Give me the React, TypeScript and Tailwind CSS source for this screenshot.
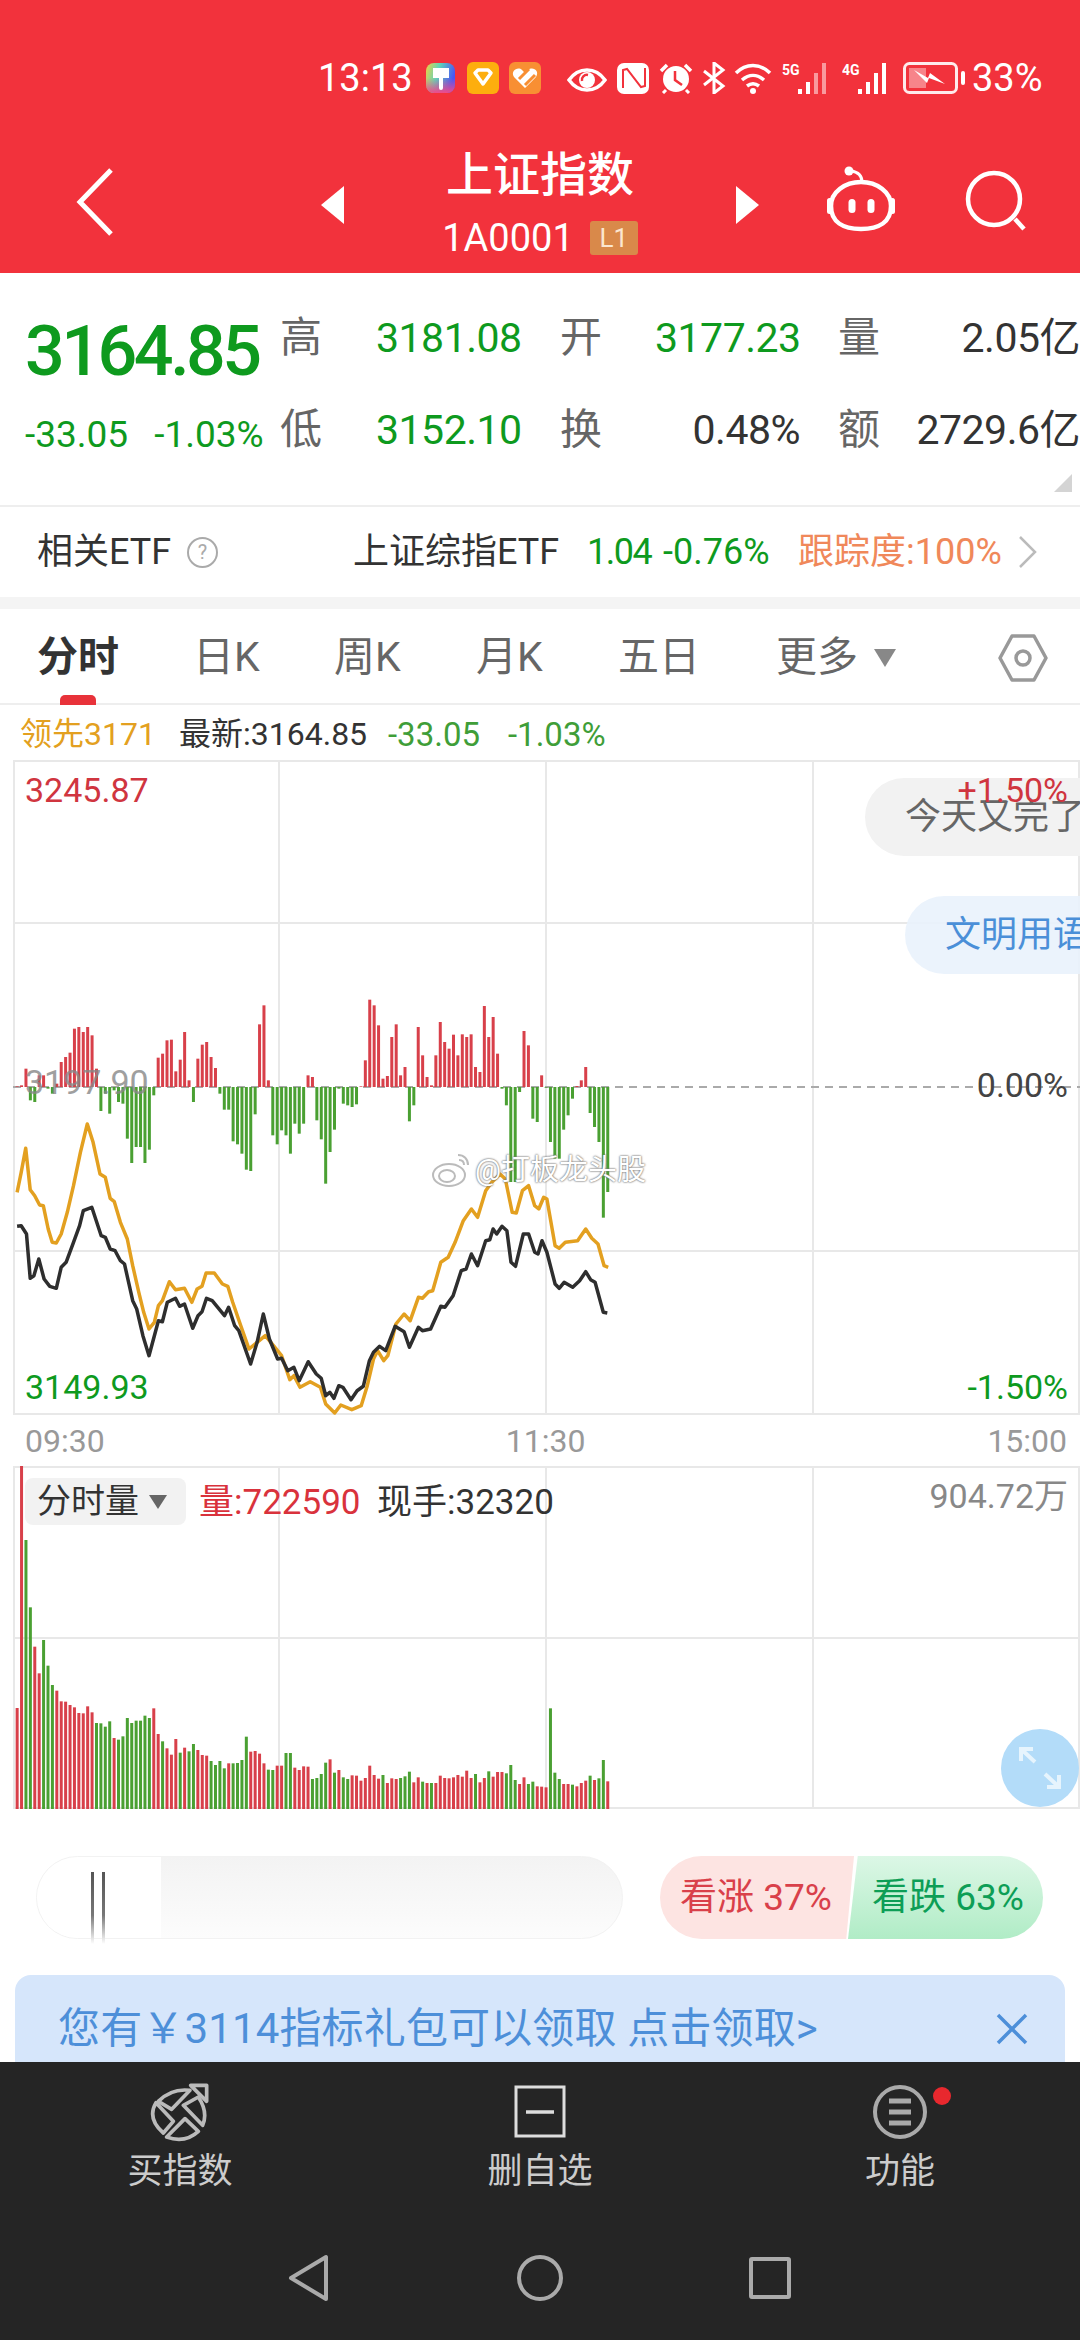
import React from "react";

// bar data is read off the reference at 2.45x horizontal, 3x vertical
const diffBars = [2,5,55,-40,-45,35,35,-5,-20,10,75,90,103,175,180,165,180,155,55,-72,-20,-80,-10,-45,-50,-155,-228,-180,-180,-228,-188,-25,88,100,140,142,47,82,165,20,-45,85,127,135,90,57,-20,-68,-68,-163,-172,-200,-248,-252,-82,188,245,20,-145,-172,-130,-145,-200,-110,-140,-110,35,30,-100,-157,-290,-195,-128,-5,-50,-55,-60,-52,2,80,262,245,185,25,33,150,188,35,60,-103,-55,180,95,30,5,95,195,135,115,157,95,158,150,158,60,45,243,150,210,100,-5,-55,-285,-285,-15,168,125,-95,-105,35,-2,-165,-215,-215,-128,-85,-35,3,20,60,-78,-120,-165,-392,-315];

const volBars: [number, "r" | "g"][] = [[802,"r"],[76,"r"],[298,"g"],[500,"g"],[618,"r"],[698,"r"],[598,"g"],[675,"g"],[733,"g"],[750,"r"],[782,"r"],[783,"r"],[793,"r"],[800,"r"],[817,"r"],[818,"r"],[797,"r"],[815,"r"],[847,"g"],[848,"g"],[858,"g"],[842,"g"],[892,"r"],[897,"g"],[887,"g"],[832,"g"],[847,"g"],[840,"g"],[840,"g"],[825,"g"],[832,"g"],[803,"r"],[880,"r"],[902,"g"],[923,"r"],[942,"r"],[895,"r"],[936,"g"],[921,"r"],[932,"g"],[910,"g"],[928,"r"],[943,"r"],[945,"r"],[961,"g"],[973,"g"],[961,"g"],[983,"g"],[968,"r"],[968,"g"],[967,"g"],[958,"g"],[888,"g"],[933,"r"],[931,"r"],[939,"r"],[968,"r"],[987,"g"],[988,"g"],[975,"r"],[975,"r"],[937,"g"],[937,"g"],[981,"r"],[988,"r"],[977,"r"],[978,"r"],[1015,"g"],[1012,"g"],[1000,"g"],[966,"g"],[956,"r"],[996,"g"],[988,"r"],[1010,"g"],[1015,"g"],[1004,"r"],[1005,"r"],[1020,"r"],[1012,"r"],[975,"r"],[1003,"r"],[1014,"r"],[1003,"g"],[1027,"r"],[1013,"r"],[1015,"r"],[1012,"g"],[1007,"g"],[993,"g"],[1025,"r"],[1010,"r"],[1023,"g"],[1027,"r"],[1027,"g"],[1027,"r"],[1005,"r"],[1012,"r"],[1013,"r"],[1010,"r"],[1003,"r"],[1008,"r"],[990,"r"],[1012,"r"],[1000,"g"],[1025,"r"],[1012,"r"],[992,"g"],[1008,"r"],[994,"r"],[994,"r"],[998,"g"],[973,"g"],[1018,"g"],[1030,"r"],[1010,"r"],[1030,"g"],[1023,"g"],[1037,"r"],[1038,"r"],[1040,"r"],[803,"g"],[996,"g"],[1015,"g"],[1030,"r"],[1030,"r"],[1032,"g"],[1037,"r"],[1027,"r"],[1020,"r"],[1005,"g"],[1018,"r"],[1013,"g"],[958,"g"],[1022,"r"]];

const yellowLine = [42,700,52,640,63,568,74,692,85,710,97,738,106,740,118,810,128,850,138,852,150,825,165,760,180,680,197,580,214,495,228,550,245,645,258,655,270,718,280,728,295,790,312,840,325,920,340,1000,352,1060,365,1110,378,1090,388,1040,398,1025,415,968,430,992,452,988,470,1030,483,990,495,982,505,942,525,942,545,975,558,982,570,1030,590,1100,610,1170,630,1150,650,1130,670,1160,690,1190,710,1262,720,1250,735,1285,760,1268,785,1285,798,1335,820,1362,835,1338,862,1352,885,1340,900,1280,915,1200,925,1175,940,1205,950,1190,970,1095,990,1065,1005,1085,1025,1015,1035,1018,1050,998,1060,995,1080,910,1098,895,1115,850,1135,785,1155,750,1170,775,1190,695,1205,670,1225,645,1238,660,1255,760,1265,762,1280,695,1295,680,1310,740,1320,750,1332,715,1340,720,1360,860,1370,868,1385,850,1415,845,1435,810,1450,838,1465,855,1480,920,1490,925];

const blackLine = [42,802,52,800,65,825,74,958,83,950,95,900,108,960,122,982,138,988,150,925,162,910,180,850,195,800,204,755,225,745,248,830,258,835,270,870,282,875,295,905,305,915,325,1025,335,1050,350,1130,365,1190,388,1085,398,1088,410,1030,430,1018,440,1042,452,1035,472,1108,485,1070,495,1058,506,1018,520,1025,550,1070,560,1045,575,1100,585,1115,614,1215,630,1150,645,1065,660,1140,680,1200,690,1198,705,1235,720,1225,733,1265,755,1208,775,1245,787,1258,798,1310,808,1300,818,1318,830,1280,840,1285,860,1322,875,1295,890,1282,905,1205,915,1180,930,1162,945,1175,968,1102,990,1118,1003,1165,1025,1105,1035,1115,1055,1110,1080,1042,1090,1045,1110,1010,1130,935,1142,930,1155,885,1170,920,1190,845,1200,842,1208,810,1217,825,1230,802,1242,815,1252,910,1263,922,1282,825,1295,825,1310,880,1318,885,1328,845,1340,880,1360,975,1370,988,1382,970,1403,985,1420,965,1435,938,1447,962,1458,970,1478,1060,1488,1062];

const toPoints = (arr: number[]) => {
  const out: string[] = [];
  for (let i = 0; i < arr.length; i += 2) {
    out.push(`${(arr[i] / 2.45).toFixed(1)},${(arr[i + 1] / 3 + 960 - 761).toFixed(1)}`);
  }
  return out.join(" ");
};

// spread n bars evenly between the first and last bar of the reference
const barX = (i: number, n: number) => (42 + (i * (1489 - 42)) / (n - 1)) / 2.45 - 1.5;

const StatusBar = () => (
  <div className="flex items-center h-[32px] mt-[62px] pl-[318px] text-white">
    <span className="text-[38px] leading-none w-[98px]">13:13</span>
    <svg width="224" height="32" viewBox="0 0 224 32" className="ml-[10px]">
      <defs>
        <linearGradient id="paintA" x1="0" y1="0" x2="1" y2="0.3">
          <stop offset="0" stopColor="#f5d040" />
          <stop offset="0.45" stopColor="#5fd6b8" />
          <stop offset="1" stopColor="#4a55f5" />
        </linearGradient>
        <linearGradient id="paintB" x1="0" y1="0" x2="0" y2="1">
          <stop offset="0.5" stopColor="#f04a8a" stopOpacity="0" />
          <stop offset="1" stopColor="#f04a8a" />
        </linearGradient>
      </defs>
      <rect x="0" y="1" width="29" height="30" rx="8" fill="url(#paintA)" />
      <rect x="0" y="1" width="29" height="30" rx="8" fill="url(#paintB)" />
      <path d="M7 6h16v10h-6v10a2 2 0 0 1-4 0V16H7z" fill="#fff" />
      <rect x="41" y="0" width="32" height="32" rx="6" fill="#fdae0e" />
      <path d="M49 11l3-3h10l3 3-8 11z" fill="none" stroke="#fff" strokeWidth="3.500" strokeLinejoin="round" />
      <rect x="83" y="0" width="32" height="32" rx="6" fill="#f88f33" />
      <path d="M99 26L88 15c-4-6 4-11 8-7l3 3 3-3c5-4 12 1 8 7z" fill="#fff" />
      <path d="M93 17l10-10M99 23l10-10" stroke="#f88f33" strokeWidth="3" />
      <path d="M143 18c5-7 11-10 18-10s13 3 18 10c-5 7-11 10-18 10s-13-3-18-10z" fill="none" stroke="#fff" strokeWidth="3.500" />
      <circle cx="161" cy="18" r="8" fill="#fff" />
      <path d="M156 19a5 5 0 0 1 6-6" fill="none" stroke="#f2323c" strokeWidth="2.500" />
      <rect x="191" y="1" width="32" height="31" rx="7" fill="#fff" />
      <path d="M198 26V8l4-1 14 18 4-1V6" fill="none" stroke="#f2323c" strokeWidth="2" transform="translate(-1 0)" />
    </svg>
    <svg width="36" height="32" viewBox="0 0 36 32" className="ml-[8px]">
      <circle cx="18" cy="17" r="13" fill="#fff" />
      <path d="M17 9v9l7 5" fill="none" stroke="#f2323c" strokeWidth="2.500" />
      <path d="M3 9l6-6M33 9l-6-6" stroke="#fff" strokeWidth="3.500" />
      <path d="M8 28l-3 3M28 28l3 3" stroke="#fff" strokeWidth="3" />
    </svg>
    <svg width="24" height="32" viewBox="0 0 24 32" className="ml-[8px]">
      <path d="M2 9l19 15-9 7V1l9 7L2 23" fill="none" stroke="#fff" strokeWidth="3" />
    </svg>
    <svg width="38" height="32" viewBox="0 0 38 32" className="ml-[8px]">
      <path d="M2 11c10-10 24-10 34 0M8 18c7-6 15-6 22 0M13 24c4-3 8-3 12 0" fill="none" stroke="#fff" strokeWidth="3.500" />
      <circle cx="19" cy="29" r="3" fill="#fff" />
    </svg>
    <svg width="50" height="32" viewBox="0 0 50 32" className="ml-[10px]">
      <text x="0" y="13" fill="#fff" fontSize="14" fontWeight="700">5G</text>
      <rect x="16" y="27" width="4" height="5" fill="#fff" />
      <rect x="24" y="20" width="4" height="12" fill="#fff" />
      <rect x="32" y="11" width="4" height="21" fill="#fff" opacity="0.5" />
      <rect x="40" y="1" width="4" height="31" fill="#fff" opacity="0.5" />
    </svg>
    <svg width="50" height="32" viewBox="0 0 50 32" className="ml-[10px]">
      <text x="0" y="13" fill="#fff" fontSize="14" fontWeight="700">4G</text>
      <rect x="16" y="27" width="4" height="5" fill="#fff" />
      <rect x="24" y="20" width="4" height="12" fill="#fff" />
      <rect x="32" y="11" width="4" height="21" fill="#fff" />
      <rect x="40" y="1" width="4" height="31" fill="#fff" />
    </svg>
    <svg width="62" height="32" viewBox="0 0 62 32" className="ml-[11px]">
      <rect x="1.500" y="1.500" width="52" height="29" rx="5" fill="none" stroke="#fff" strokeOpacity="0.9" strokeWidth="3" />
      <rect x="6" y="6" width="17" height="20" fill="#fff" opacity="0.4" />
      <path d="M11 8l14 8 2-5 15 11-16-6-2 5z" fill="#fff" />
      <rect x="58" y="9" width="4" height="14" rx="2" fill="#fff" />
    </svg>
    <span className="text-[38px] leading-none ml-[7px]">33%</span>
  </div>
);

const Header = () => (
  <div className="h-[273px] bg-[#f2323c] flex flex-col text-white shrink-0">
    <StatusBar />
    <div className="flex items-start mt-[42px]">
      <svg width="40" height="72" viewBox="0 0 40 72" className="ml-[75px] mt-[30px]">
        <path d="M36 4L5 36l31 32" fill="none" stroke="#fff" strokeWidth="5" />
      </svg>
      <svg width="24" height="38" viewBox="0 0 24 38" className="ml-[206px] mt-[50px]">
        <path d="M23 0v38L0 19z" fill="#fff" />
      </svg>
      <div className="w-[390px] flex flex-col items-center pt-[11px]">
        <span className="text-[47px] leading-[56px] font-medium">上证指数</span>
        <div className="flex items-center mt-[15px]">
          <span className="text-[38px] leading-[40px]">1A0001</span>
          <span className="ml-[16px] w-[48px] h-[34px] bg-[#d9894a] rounded-[3px] text-[26px] leading-[34px] text-center text-[#fbe6d0]">L1</span>
        </div>
      </div>
      <svg width="24" height="38" viewBox="0 0 24 38" className="mt-[50px]">
        <path d="M1 0v38l23-19z" fill="#fff" />
      </svg>
      <svg width="72" height="70" viewBox="0 0 72 70" className="ml-[66px] mt-[30px]">
        <circle cx="24" cy="5" r="4.500" fill="#fff" />
        <path d="M26 5c7 1 11 5 11 11" fill="none" stroke="#fff" strokeWidth="3" />
        <path d="M36 16c16 0 30 10 30 24 0 16-12 23-30 23S6 56 6 40c0-14 14-24 30-24z" fill="none" stroke="#fff" strokeWidth="4.500" />
        <rect x="2" y="32" width="5" height="16" rx="2.500" fill="#fff" />
        <rect x="65" y="32" width="5" height="16" rx="2.500" fill="#fff" />
        <rect x="23.500" y="33" width="7" height="14" rx="3.500" fill="#fff" />
        <rect x="42.500" y="33" width="7" height="14" rx="3.500" fill="#fff" />
      </svg>
      <svg width="70" height="70" viewBox="0 0 70 70" className="ml-[63px] mt-[30px]">
        <circle cx="34" cy="33" r="26" fill="none" stroke="#fff" strokeWidth="4.500" />
        <path d="M55 53l9 10" fill="none" stroke="#fff" strokeWidth="4.500" />
      </svg>
    </div>
  </div>
);

const G = "text-[#0e9a1e]";

const Quote = () => (
  <div className="relative h-[234px] border-b-2 border-[#eeeeee] shrink-0 flex">
    <div className="w-[280px] pl-[25px] shrink-0">
      <div className={`text-[70px] leading-[80px] font-medium tracking-[-3.500px] mt-[38px] ${G}`}>3164.85</div>
      <div className={`flex text-[37px] leading-[40px] mt-[24px] whitespace-nowrap ${G}`}>
        <span>-33.05</span>
        <span className="ml-[26px]">-1.03%</span>
      </div>
    </div>
    <div className="flex flex-col mt-[43px] gap-[48px] flex-1">
      <QuoteRow a="高" b="3181.08" c="开" d="3177.23" e="量" f="2.05亿" />
      <QuoteRow a="低" b="3152.10" c="换" d="0.48%" dark e="额" f="2729.6亿" />
    </div>
    {/* corner mark */}
    <svg width="18" height="18" viewBox="0 0 18 18" className="absolute right-[8px] bottom-[13px]">
      <path d="M18 0v18H0z" fill="#d4d4d4" />
    </svg>
  </div>
);

const QuoteRow = ({ a, b, c, d, e, f, dark }: { a: string; b: string; c: string; d: string; e: string; f: string; dark?: boolean }) => (
  <div className="flex items-center h-[44px] text-[41px] leading-[44px]">
    <span className="w-[96px] text-[#666666] text-[42px]">{a}</span>
    <span className={`w-[184px] tracking-[-0.500px] ${G}`}>{b}</span>
    <span className="w-[95px] text-[#666666] text-[42px]">{c}</span>
    <span className={`w-[145px] text-right tracking-[-0.500px] ${dark ? "text-[#333333]" : G}`}>{d}</span>
    <span className="ml-[38px] w-[42px] text-[#666666] text-[42px]">{e}</span>
    <span className="w-[200px] text-right text-[#333333] tracking-[-0.500px]">{f}</span>
  </div>
);

const EtfRow = () => (
  <div className="h-[90px] flex items-center shrink-0 text-[36px] border-b-[12px] border-[#f4f4f4] box-content">
    <span className="ml-[37px] w-[133px] text-[#333333] whitespace-nowrap">相关ETF</span>
    <span className="ml-[17px] w-[31px] h-[31px] rounded-full border-2 border-[#aaaaaa] text-[#aaaaaa] text-[20px] leading-[27px] text-center">?</span>
    <span className="ml-[135px] w-[206px] text-[#333333] whitespace-nowrap">上证综指ETF</span>
    <span className={`ml-[28px] w-[60px] tracking-[-1.500px] ${G}`}>1.04</span>
    <span className={`ml-[16px] w-[110px] whitespace-nowrap ${G}`}>-0.76%</span>
    <span className="ml-[25px] w-[200px] text-[#f0885a] whitespace-nowrap">跟踪度:100%</span>
    <svg width="20" height="34" viewBox="0 0 20 34" className="ml-[20px]">
      <path d="M2 2l15 15L2 32" fill="none" stroke="#bbbbbb" strokeWidth="2.500" />
    </svg>
  </div>
);

const tabs = [
  { label: "日K", w: "w-[65px]", ml: "ml-[73px]" },
  { label: "周K", w: "w-[68px]", ml: "ml-[76px]" },
  { label: "月K", w: "w-[68px]", ml: "ml-[74px]" },
  { label: "五日", w: "w-[80px]", ml: "ml-[74px]" },
];

const Tabs = () => (
  <div className="relative h-[96px] flex items-center shrink-0 border-b-2 border-[#eeeeee] text-[41px] text-[#666666] pt-[3px]">
    <span className="ml-[37px] w-[83px] font-bold text-[#333333]">分时</span>
    {tabs.map((t) => (
      <span key={t.label} className={`${t.ml} ${t.w} whitespace-nowrap`}>{t.label}</span>
    ))}
    <span className="ml-[78px] whitespace-nowrap">更多</span>
    <svg width="22" height="20" viewBox="0 0 22 20" className="ml-[16px]">
      <path d="M0 1h22L11 19z" fill="#888888" />
    </svg>
    <svg width="50" height="50" viewBox="0 0 50 50" className="ml-[102px]">
      <path d="M14 3h22l12 22-12 22H14L2 25z" fill="none" stroke="#999999" strokeWidth="3.500" strokeLinejoin="round" />
      <circle cx="25" cy="25" r="7" fill="none" stroke="#999999" strokeWidth="3.500" />
    </svg>
    <div className="absolute left-[60px] -bottom-[2px] w-[36px] h-[10px] rounded-t-[5px] bg-[#e8323a]" />
  </div>
);

const InfoLine = () => (
  <div className="h-[55px] flex items-center shrink-0 text-[32px] leading-none pt-[3px]">
    <span className="ml-[20px] w-[133px] text-[#e3a020] whitespace-nowrap">领先3171</span>
    <span className="ml-[26px] w-[184px] text-[#333333] whitespace-nowrap">最新:3164.85</span>
    <span className="ml-[25px] w-[94px] text-[33px] text-[#3f9e38]">-33.05</span>
    <span className="ml-[26px] text-[33px] text-[#3f9e38]">-1.03%</span>
  </div>
);

const PriceChart = () => (
  <div className="relative h-[656px] shrink-0 text-[34px] leading-none overflow-hidden">
    <svg width="1080" height="656" viewBox="0 0 1080 656" className="block">
      <g stroke="#e8e8e8" strokeWidth="2" fill="none">
        <path d="M13 1H1080M13 163H1080M13 491H1080M13 654H1080" />
        <path d="M14 0V654M279 0V654M546 0V654M813 0V654M1079 0V654" />
      </g>
      <path d="M13 327H1080" stroke="#aaaaaa" strokeWidth="2" strokeDasharray="8 6" />
      {diffBars.map((v, i) => {
        const h = Math.abs(v) / 3;
        return (
          <rect key={i} x={barX(i, diffBars.length)} y={v > 0 ? 327 - h : 327} width="3" height={h} fill={v > 0 ? "#d8404a" : "#4aa032"} />
        );
      })}
      <polyline points={toPoints(yellowLine)} fill="none" stroke="#e3a020" strokeWidth="3.500" strokeLinejoin="round" />
      <polyline points={toPoints(blackLine)} fill="none" stroke="#2e2e2e" strokeWidth="3.500" strokeLinejoin="round" />
    </svg>
    <span className="absolute left-[25px] top-[13px] text-[#d0353f]">3245.87</span>
    <span className="absolute left-[25px] top-[305px] text-[#888888] opacity-80">3197.90</span>
    <span className="absolute left-[25px] top-[610px] text-[#0e9a1e]">3149.93</span>
    <span className="absolute right-[12px] top-[308px] text-[#444444]">0.00%</span>
    <span className="absolute right-[12px] top-[610px] text-[#0e9a1e]">-1.50%</span>
    {/* chat bubbles over the chart */}
    <div className="absolute left-[865px] top-[18px] w-[240px] h-[78px] rounded-l-[39px] bg-[#f2f2f2] flex items-center pl-[40px] text-[36px] text-[#666666] whitespace-nowrap">今天又完了</div>
    <div className="absolute left-[905px] top-[136px] w-[200px] h-[78px] rounded-l-[39px] bg-[#e9f2fc]/90 flex items-center pl-[40px] text-[36px] text-[#4a8fd8] whitespace-nowrap">文明用语</div>
    <span className="absolute right-[12px] top-[13px] text-[#d0353f]">+1.50%</span>
    {/* weibo watermark */}
    <div className="absolute left-[432px] top-[392px] flex items-center">
      <svg width="40" height="36" viewBox="0 0 40 36">
        <ellipse cx="17" cy="23" rx="16" ry="11" fill="#ffffff" stroke="#bbbbbb" strokeWidth="2" />
        <ellipse cx="15" cy="24" rx="8" ry="6" fill="none" stroke="#bbbbbb" strokeWidth="2" />
        <path d="M26 3c6 0 10 4 10 10M27 8c3 0 5 2 5 5" fill="none" stroke="#bbbbbb" strokeWidth="2" />
      </svg>
      <span className="ml-[3px] text-[29px] text-white [text-shadow:0_0_2px_#777,0_0_2px_#777]">@打板龙头股</span>
    </div>
  </div>
);

const TimeAxis = () => (
  <div className="h-[50px] flex items-center shrink-0 relative text-[32px] text-[#999999]">
    <span className="ml-[25px]">09:30</span>
    <span className="ml-[401px]">11:30</span>
    <span className="ml-[402px]">15:00</span>
  </div>
);

const VolumeChart = () => (
  <div className="relative h-[344px] shrink-0 overflow-hidden">
    <svg width="1080" height="344" viewBox="0 0 1080 344" className="block">
      <g stroke="#e8e8e8" strokeWidth="2" fill="none">
        <path d="M13 1H1080M13 172H1080M13 342H1080" />
        <path d="M14 0V342M279 0V342M546 0V342M813 0V342M1079 0V342" />
      </g>
      {volBars.map(([top, c], i) => {
        const y = (top - 76) / 3;
        return <rect key={i} x={barX(i, volBars.length)} y={y} width="3" height={343 - y} fill={c === "r" ? "#d8404a" : "#4aa032"} />;
      })}
    </svg>
    <div className="absolute left-[25px] top-[12px] w-[161px] h-[47px] rounded-[8px] bg-[#f2f2f2] flex items-center pl-[12px] text-[34px] text-[#333333]">
      分时量
      <svg width="18" height="14" viewBox="0 0 18 14" className="ml-[10px]">
        <path d="M0 0h18L9 14z" fill="#666666" />
      </svg>
    </div>
    <span className="absolute left-[199px] top-[17px] text-[35px] leading-[40px] text-[#d9323c]">量:722590</span>
    <span className="absolute left-[377px] top-[17px] text-[35px] leading-[40px] text-[#333333]">现手:32320</span>
    <span className="absolute right-[12px] top-[10px] text-[34px] leading-[40px] text-[#888888]">904.72万</span>
    <div className="absolute left-[1001px] top-[263px] w-[78px] h-[78px] rounded-full bg-[#b3dcf9] flex items-center justify-center">
      <svg width="50" height="50" viewBox="0 0 50 50">
        <path d="M6 18V6h12M6 6l14 13M44 32v12H32M44 44L30 31" fill="none" stroke="#e6f4fd" strokeWidth="4" />
      </svg>
    </div>
  </div>
);

const Sentiment = () => (
  <div className="h-[165px] shrink-0 flex items-start pt-[46px]">
    <div className="relative ml-[36px] w-[587px] h-[83px]">
      <div className="w-full h-full rounded-[42px] border border-[#f2f2f2] bg-gradient-to-b from-[#f3f3f3] to-[#fcfcfc] overflow-hidden">
        <div className="w-[124px] h-full bg-white" />
      </div>
      <svg width="14" height="72" viewBox="0 0 14 72" className="absolute left-[55px] top-[16px]">
        <defs>
          <linearGradient id="shine" x1="0" y1="0" x2="0" y2="1">
            <stop offset="0" stopColor="#555555" />
            <stop offset="0.6" stopColor="#777777" />
            <stop offset="1" stopColor="#ffffff" />
          </linearGradient>
        </defs>
        <rect x="0" width="3" height="72" fill="url(#shine)" />
        <rect x="11" width="3" height="72" fill="url(#shine)" />
      </svg>
    </div>
    <div className="ml-[37px] flex w-[383px] h-[83px]">
      <div className="w-[194px] h-full rounded-l-[42px] bg-[#fde4e2] [clip-path:polygon(0_0,100%_0,96%_100%,0_100%)] flex items-center pl-[20px] text-[37px] text-[#d9404a] whitespace-nowrap">看涨 37%</div>
      <div className="w-[195px] -ml-[6px] h-full rounded-r-[42px] bg-gradient-to-b from-[#dcf7e6] to-[#b0ecc6] [clip-path:polygon(5%_0,100%_0,100%_100%,0_100%)] flex items-center pl-[24px] text-[37px] text-[#0d9e56] whitespace-nowrap">看跌 63%</div>
    </div>
  </div>
);

const Banner = () => (
  <div className="h-[87px] mx-[15px] rounded-t-[16px] bg-[#d6e6fb] flex items-start pt-[30px] shrink-0 text-[#4d8fd9] text-[42px] leading-[48px]">
    <span className="ml-[43px] w-[760px] whitespace-nowrap tracking-[0.150px]">您有￥3114指标礼包可以领取 点击领取&gt;</span>
    <svg width="32" height="32" viewBox="0 0 32 32" className="ml-[178px] mt-[8px]">
      <path d="M2 2l28 28M30 2L2 30" fill="none" stroke="#4d8fd9" strokeWidth="3.500" />
    </svg>
  </div>
);

const BottomBar = () => (
  <div className="h-[280px] bg-[#252525] shrink-0 flex flex-col text-[#cccccc] text-[35px]">
    <div className="flex pt-[20px]">
      <div className="w-[360px] flex flex-col items-center">
        <svg width="60" height="60" viewBox="60 30 180 180">
          <g fill="none" stroke="#bbbbbb" strokeWidth="11" strokeLinejoin="round">
            <path d="M85 88Q125 48 180 55L125 112Z" />
            <path d="M205 75Q235 120 218 160L160 100Z" />
            <path d="M78 92L130 148L100 183Q50 140 78 92Z" />
            <path d="M165 140L205 178Q165 215 110 195Z" />
            <path d="M182 40H230V88Z" />
          </g>
        </svg>
        <span className="mt-[8px] leading-[44px]">买指数</span>
      </div>
      <div className="w-[360px] flex flex-col items-center">
        <svg width="60" height="60" viewBox="0 0 60 60">
          <rect x="6" y="5" width="48" height="49" fill="none" stroke="#dddddd" strokeWidth="3" />
          <path d="M16 30h28" stroke="#dddddd" strokeWidth="3.500" />
        </svg>
        <span className="mt-[8px] leading-[44px]">删自选</span>
      </div>
      <div className="w-[360px] flex flex-col items-center relative">
        <svg width="60" height="60" viewBox="0 0 60 60">
          <circle cx="30" cy="30" r="25" fill="none" stroke="#aaaaaa" strokeWidth="4" />
          <path d="M19 19h22M19 30h22M19 41h22" stroke="#aaaaaa" strokeWidth="5" />
        </svg>
        <span className="mt-[8px] leading-[44px]">功能</span>
        <div className="absolute left-[213px] top-[5px] w-[18px] h-[18px] rounded-full bg-[#e8282e]" />
      </div>
    </div>
    <div className="flex mt-[60px] pl-[288px] items-center">
      <svg width="42" height="48" viewBox="0 0 42 48">
        <path d="M38 3v42L3 24z" fill="none" stroke="#aaaaaa" strokeWidth="4" strokeLinejoin="round" />
      </svg>
      <div className="ml-[187px] w-[46px] h-[46px] rounded-full border-4 border-[#aaaaaa]" />
      <div className="ml-[186px] w-[42px] h-[42px] rounded-[3px] border-4 border-[#aaaaaa]" />
    </div>
  </div>
);

export default function App() {
  return (
    <div className="w-[1080px] h-[2340px] overflow-hidden bg-white flex flex-col font-['Roboto','Noto_Sans_CJK_SC',sans-serif]">
      <Header />
      <Quote />
      <EtfRow />
      <Tabs />
      <InfoLine />
      <PriceChart />
      <TimeAxis />
      <VolumeChart />
      <Sentiment />
      <Banner />
      <BottomBar />
    </div>
  );
}
